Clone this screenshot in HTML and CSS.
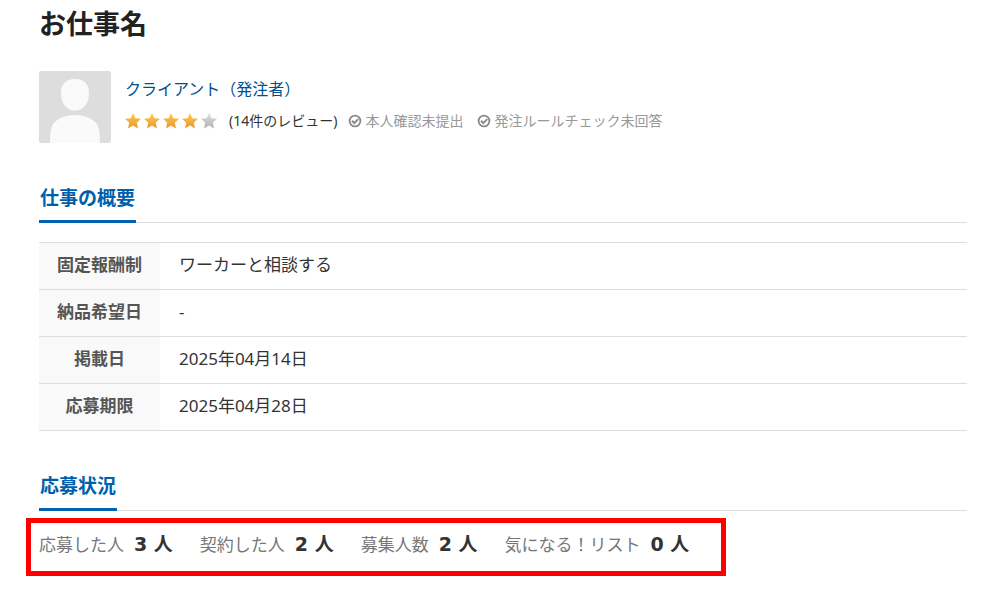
FILE: index.html
```html
<!DOCTYPE html>
<html lang="ja">
<head>
  <meta charset="UTF-8">
  <meta name="viewport" content="width=device-width, initial-scale=1.0">
  <title>お仕事名</title>
  <link rel="stylesheet" href="styles.css">
</head>
<body>
  <!-- Shared icons -->
  <svg class="sprite" aria-hidden="true">
    <defs>
      <linearGradient id="gold" x1="0" y1="0" x2="0" y2="1">
        <stop offset="0" stop-color="#f5d04e"/>
        <stop offset="1" stop-color="#f3922f"/>
      </linearGradient>
      <linearGradient id="silver" x1="0" y1="0" x2="0" y2="1">
        <stop offset="0" stop-color="#dedede"/>
        <stop offset="1" stop-color="#b2b2b2"/>
      </linearGradient>
      <symbol id="star" viewBox="0 0 16 16">
        <path d="M8 0l2.3 5.2 5.7.6-4.2 3.9 1.2 5.8L8 12.6l-5 2.9 1.2-5.8L0 5.8l5.7-.6z"/>
      </symbol>
      <symbol id="check" viewBox="0 0 14 14">
        <circle cx="7" cy="7" r="5.4" fill="none" stroke="currentColor" stroke-width="1.8"/>
        <path d="M4 6.8l2.3 2.3 3.9-4" fill="none" stroke="currentColor" stroke-width="2"/>
      </symbol>
    </defs>
  </svg>

  <main class="job">
    <h1 class="job-title">お仕事名</h1>

    <!-- Client -->
    <div class="client">
      <svg class="avatar" viewBox="0 0 72 72" role="img" aria-label="クライアント">
        <rect width="72" height="72" rx="2" fill="#ddd"/>
        <path d="M36 8c9 0 14 5 14 14 0 10-5 17.500-14 17.500S22 32 22 22C22 13 27 8 36 8z" fill="#fafafa"/>
        <path d="M11 72c0-10 1-17 4-20 4-5 12-8 21-8s17 3 21 8c3 3 4 10 4 20z" fill="#fafafa"/>
      </svg>
      <div class="client-info">
        <a class="client-name" href="#">クライアント（発注者）</a>
        <div class="client-meta">
          <span class="stars" role="img" aria-label="4 / 5">
            <svg class="star"><use href="#star"/></svg>
            <svg class="star"><use href="#star"/></svg>
            <svg class="star"><use href="#star"/></svg>
            <svg class="star"><use href="#star"/></svg>
            <svg class="star star-off"><use href="#star"/></svg>
          </span>
          <span class="reviews">(14件のレビュー)</span>
          <span class="status"><svg class="check"><use href="#check"/></svg>本人確認未提出</span>
          <span class="status"><svg class="check"><use href="#check"/></svg>発注ルールチェック未回答</span>
        </div>
      </div>
    </div>

    <!-- Overview -->
    <section class="section">
      <div class="section-head"><h2>仕事の概要</h2></div>
      <table class="overview">
        <tr><th scope="row">固定報酬制</th><td>ワーカーと相談する</td></tr>
        <tr><th scope="row">納品希望日</th><td>-</td></tr>
        <tr><th scope="row">掲載日</th><td>2025年04月14日</td></tr>
        <tr><th scope="row">応募期限</th><td>2025年04月28日</td></tr>
      </table>
    </section>

    <!-- Applications -->
    <section class="section">
      <div class="section-head"><h2>応募状況</h2></div>
      <dl class="stats">
        <div class="stat"><dt>応募した人</dt><dd>3 人</dd></div>
        <div class="stat"><dt>契約した人</dt><dd>2 人</dd></div>
        <div class="stat"><dt>募集人数</dt><dd>2 人</dd></div>
        <div class="stat"><dt>気になる！リスト</dt><dd>0 人</dd></div>
      </dl>
    </section>
  </main>
</body>
</html>
```
FILE: styles.css
```css
* {
  margin: 0;
  padding: 0;
  box-sizing: border-box;
}

body {
  background: #fff;
  color: #333;
  font-family: "Noto Sans", "Noto Sans CJK JP", sans-serif;
  font-size: 17px;
  line-height: 24px;
}

.sprite {
  position: absolute;
  width: 0;
  height: 0;
}

.job {
  padding: 4px 28px 16px 39px;
}

.job-title {
  font-size: 27px;
  line-height: 40px;
  color: #222;
}

/* Client */
.client {
  display: flex;
  gap: 14px;
  margin-top: 27px;
}

.avatar {
  flex: none;
  width: 72px;
  height: 72px;
}

.client-info {
  padding-top: 6px;
}

.client-name {
  display: block;
  font-size: 16px;
  color: #00508f;
  text-decoration: none;
}

.client-name:hover {
  text-decoration: underline;
}

.client-meta {
  display: flex;
  flex-wrap: wrap;
  align-items: center;
  margin-top: 8px;
  font-size: 14px;
}

.stars {
  display: flex;
  gap: 3px;
  margin-right: 12px;
}

.star {
  width: 16px;
  height: 16px;
  fill: url(#gold);
}

.star-off {
  fill: url(#silver);
}

.status {
  display: flex;
  align-items: center;
  gap: 3px;
  margin: 0 3px 0 11px;
  color: #999;
}

.check {
  width: 14px;
  height: 14px;
  color: #888;
}

/* Sections */
.section {
  margin-top: 36px;
}

.section-head {
  display: flex;
  border-bottom: 1px solid #ddd;
}

.section-head h2 {
  margin-bottom: -1px;
  padding: 6px 1px 9px;
  border-bottom: 3px solid #0062b1;
  font-size: 19px;
  line-height: 26px;
  color: #005fac;
}

.overview {
  width: 100%;
  margin-top: 19px;
  border-collapse: collapse;
}

.overview tr {
  border-top: 1px solid #ddd;
  border-bottom: 1px solid #ddd;
}

.overview th {
  width: 121px;
  padding: 10px 0 12px;
  background: #f9f9f9;
  color: #555;
  text-align: center;
}

.overview td {
  padding: 10px 19px 12px;
}

/* Applications */
.stats {
  display: flex;
  flex-wrap: wrap;
  gap: 27px;
  width: fit-content;
  margin: 7px 0 0 -13px;
  padding: 9px 32px 14px 8px;
  border: 5px solid #f00;
}

.stat {
  display: flex;
  align-items: baseline;
  gap: 10px;
}

.stat dt {
  color: #777;
}

.stat dd {
  font-family: "DejaVu Sans", "Noto Sans CJK JP", sans-serif;
  font-size: 19px;
  font-weight: bold;
}
```
